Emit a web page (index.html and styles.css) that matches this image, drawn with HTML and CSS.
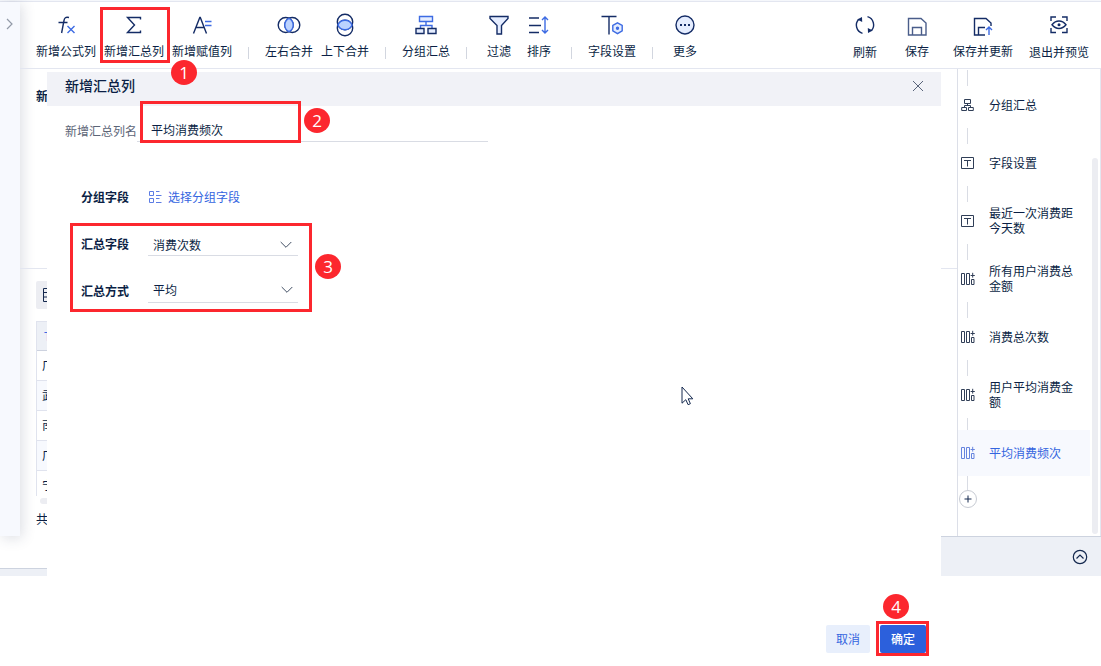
FILE: index.html
```html
<!DOCTYPE html>
<html lang="zh-CN">
<head>
<meta charset="utf-8">
<title>新增汇总列</title>
<link rel="stylesheet" href="styles.css">
</head>
<body>
<svg class="defs" width="0" height="0">
  <symbol id="col" viewBox="0 0 14 14"><path d="M.5 1.5h3v11h-3zM5.500 1.500h3v11h-3zM10.500 7.500h2.500v5h-2.500z"/><path d="M11.700 0.800v4.800M9.600 3.500h4.200"/></symbol>
  <symbol id="tbox" viewBox="0 0 14 14"><path d="M.5 1.500h12v11H.5zM3 4.500h7M6.500 4.500v6"/></symbol>
  <symbol id="org" viewBox="0 0 14 14"><path d="M3.500 1.500h6v4h-6zM.7 9.500h4.800v3H.7zM7.500 9.500h4.800v3H7.500zM6.500 5.500v2M3.500 9.500v-2h6v2"/></symbol>
</svg>
<div class="app">
  <div class="shell">
    <aside class="rail"><svg width="8" height="12" viewBox="0 0 8 12"><path d="M1 1l5 5-5 5"/></svg></aside>
    <div class="main">
      <header class="toolbar">
        <div class="tools">
          <div class="tool"><svg class="icon" viewBox="0 0 24 24"><path d="M15 4.500c-3.500-.8-4.500 .4-5 3L7.600 20M4.500 9.500h9"/><path class="blue" d="M13.500 13l7 7M20.500 13l-7 7"/></svg><span>新增公式列</span></div>
          <div class="tool"><svg class="icon" viewBox="0 0 24 24"><path d="M18.500 6.500V4.500H5.500l7 7.500-7 7.500h13v-2"/></svg><span>新增汇总列</span></div>
          <div class="tool"><svg class="icon" viewBox="0 0 24 24"><path d="M3.500 20.500L9.800 4.500h.5L16.500 20.500M6 14.500h8"/><path class="blue" d="M15 8.500h6.500M15 12.500h6.500"/></svg><span>新增赋值列</span></div>
          <i class="sep"></i>
          <div class="tool"><svg class="icon" viewBox="0 0 24 24"><circle cx="8.700" cy="12" r="7.500"/><circle cx="15.300" cy="12" r="7.500"/><path class="fill" d="M12 5.270a7.500 7.500 0 0 1 0 13.460a7.500 7.500 0 0 1 0-13.460z"/></svg><span>左右合并</span></div>
          <div class="tool"><svg class="icon" viewBox="0 0 24 24"><circle cx="12" cy="9" r="7.700"/><circle cx="12" cy="15" r="7.700"/><path class="fill" d="M4.910 12a7.700 7.700 0 0 1 14.180 0a7.700 7.700 0 0 1-14.180 0z"/></svg><span>上下合并</span></div>
          <i class="sep"></i>
          <div class="tool"><svg class="icon" viewBox="0 0 24 24"><path class="blue tint" d="M5.500 3.500h13v5h-13z"/><path class="blue" d="M12 8.500v4M6.500 15v-2.500h11.500V15"/><path class="tint" d="M2 15.500h8v5H2zM14 15.500h8v5h-8z"/></svg><span>分组汇总</span></div>
          <i class="sep"></i>
          <div class="tool"><svg class="icon" viewBox="0 0 24 24"><path class="tint" d="M3 3.500h18v2l-6.500 7V21h-4.500v-8.500L3 5.500z"/></svg><span>过滤</span></div>
          <div class="tool"><svg class="icon" viewBox="0 0 24 24"><path d="M2 5h10M2 12.500h12M2 19.500h10"/><path class="blue" d="M18 4v16M15 7l3-3 3 3M15 17l3 3 3-3"/></svg><span>排序</span></div>
          <i class="sep"></i>
          <div class="tool"><svg class="icon" viewBox="0 0 24 24"><path d="M1.500 3.500h15M9 3.500V21.500"/><path class="blue tint" d="M17.500 9.800l4.700 2.700v5.400L17.500 20.600l-4.700-2.700v-5.400z"/><circle class="blue dot" cx="17.500" cy="15.200" r="1"/></svg><span>字段设置</span></div>
          <i class="sep"></i>
          <div class="tool"><svg class="icon" viewBox="0 0 24 24"><circle class="tint" cx="12" cy="12" r="9"/><path class="thick" d="M7 12h2M11 12h2M15 12h2"/></svg><span>更多</span></div>
        </div>
        <div class="actions">
          <div class="tool low"><svg class="icon" viewBox="0 0 24 24"><path d="M9.500 20.300A8.500 8.500 0 0 1 5.800 6.200M14.500 3.700A8.500 8.500 0 0 1 18.200 17.800"/><path class="solid" d="M9 4l.2 5-5-2.500zM15 20l-.2-5 5 2.500z"/></svg><span>刷新</span></div>
          <div class="tool"><svg class="icon save" viewBox="0 0 24 24"><path d="M3.500 5.500H16l5 4.500v12H3.500zM7.500 22v-7.500h9V22"/></svg><span>保存</span></div>
          <div class="tool"><svg class="icon" viewBox="0 0 24 24"><path d="M14 22H3.500V5.500H15l5 4.500v3M7.500 22v-7.500h6.500"/><path class="blue" d="M18 22v-8M15 17l3-3 3 3"/></svg><span>保存并更新</span></div>
          <div class="tool low"><svg class="icon" viewBox="0 0 24 24"><path d="M4 8V4h5M15 4h5V8M20 15v4.500h-5M9 19.500H4V15"/><path d="M5 11.800c4-5 10-5 14 0-4 5-10 5-14 0z"/><circle class="solid" cx="12" cy="11.800" r="1.500"/></svg><span>退出并预览</span></div>
        </div>
      </header>
      <div class="body">
        <section class="work">
          <div class="work-head">新</div>
          <div class="work-data">
            <div class="view-btn"><svg width="14" height="14" viewBox="0 0 14 14"><path d="M1.500 .5h12v13h-12zM1.500 4.500h12M1.500 9h12"/></svg></div>
            <div class="grid">
              <div class="grid-head">T</div>
              <div class="grid-row">广</div>
              <div class="grid-row alt">武</div>
              <div class="grid-row">南</div>
              <div class="grid-row alt">广</div>
              <div class="grid-row last">宁</div>
            </div>
            <div class="hbar"></div>
            <div class="count">共</div>
          </div>
        </section>
        <aside class="steps">
          <div class="list">
            <i class="link"></i>
            <div class="step"><svg><use href="#org"/></svg><span>分组汇总</span></div>
            <i class="link"></i>
            <div class="step"><svg><use href="#tbox"/></svg><span>字段设置</span></div>
            <i class="link"></i>
            <div class="step"><svg><use href="#tbox"/></svg><span>最近一次消费距今天数</span></div>
            <i class="link"></i>
            <div class="step"><svg><use href="#col"/></svg><span>所有用户消费总金额</span></div>
            <i class="link"></i>
            <div class="step"><svg><use href="#col"/></svg><span>消费总次数</span></div>
            <i class="link"></i>
            <div class="step"><svg><use href="#col"/></svg><span>用户平均消费金额</span></div>
            <i class="link"></i>
            <div class="step active"><svg><use href="#col"/></svg><span>平均消费频次</span></div>
            <i class="link end"></i>
            <div class="add"><svg width="8" height="8" viewBox="0 0 8 8"><path d="M4 .5v7M.5 4h7"/></svg></div>
          </div>
          <div class="vbar"></div>
        </aside>
      </div>
    </div>
  </div>
  <footer class="foot">
    <div class="foot-left"></div>
    <div class="foot-right"><svg width="16" height="16" viewBox="0 0 16 16"><circle cx="8" cy="8" r="6.700"/><path d="M4.500 9.500L8 6l3.500 3.500"/></svg></div>
  </footer>
</div>

<div class="dialog">
  <div class="dialog-head"><span>新增汇总列</span><svg width="12" height="12" viewBox="0 0 12 12"><path d="M1 1l10 10M11 1L1 11"/></svg></div>
  <div class="name-row"><label>新增汇总列名</label><div class="input">平均消费频次</div></div>
  <div class="form">
    <div class="row"><label>分组字段</label><div class="pick"><svg width="14" height="12" viewBox="0 0 14 12"><path d="M1.500 .5h4v4h-4zM1.500 7.500h4v4h-4zM8 .5h3.500M8 4.500h5.500M8 7.500h3.500M8 11.500h5.500"/></svg>选择分组字段</div></div>
    <div class="row"><label>汇总字段</label><div class="select">消费次数<svg width="12" height="8" viewBox="0 0 12 8"><path d="M.7 1l5.300 5.300L11.300 1"/></svg></div></div>
    <div class="row"><label>汇总方式</label><div class="select second">平均<svg width="12" height="8" viewBox="0 0 12 8"><path d="M.7 1l5.300 5.300L11.300 1"/></svg></div></div>
  </div>
  <div class="buttons"><div class="btn">取消</div><div class="btn primary">确定</div></div>
</div>

<div class="mark m1"></div><div class="num n1">1</div>
<div class="mark m2"></div><div class="num n2">2</div>
<div class="mark m3"></div><div class="num n3">3</div>
<div class="mark m4"></div><div class="num n4">4</div>
<svg class="cursor" width="13" height="20" viewBox="0 0 13 20"><path d="M1 1v16.200l3.800-3.500 2.300 5 2.300-1-2.200-4.900h4.600z"/></svg>
</body>
</html>
```
FILE: styles.css
```css
* { box-sizing: border-box; }
body {
  margin: 0;
  width: 1101px;
  height: 666px;
  overflow: hidden;
  position: relative;
  background: #fff;
  color: #0b1f45;
  font: 12px/16px "Noto Sans CJK SC", sans-serif;
}
svg { fill: none; stroke: #14284e; flex: none; display: block; }
.defs { position: absolute; }
.app { display: flex; flex-direction: column; border-top: 1px solid #f5f7fb; }
.shell { display: flex; height: 535px; border-top: 1px solid #e3e6f0; }
.rail {
  width: 20px;
  height: 534px;
  padding: 16px 0 0 6px;
  background: #f7f9fe;
  box-shadow: 2px 2px 14px rgba(40, 55, 90, .17);
}
.rail svg { stroke: #929aa8; stroke-width: 1.2; }
.main { flex: 1; display: flex; flex-direction: column; }
.toolbar {
  height: 67px;
  flex: none;
  display: flex;
  justify-content: space-between;
  padding: 11px 6px 0 12px;
  border-bottom: 1px solid #e3e6f0;
}
.tools { display: flex; }
.tool {
  min-width: 40px;
  padding: 0 4px;
  display: flex;
  flex-direction: column;
  align-items: center;
  white-space: nowrap;
}
.icon { width: 24px; height: 24px; margin-bottom: 6px; stroke: #142c66; stroke-width: 1.4; }
.save { stroke: #4a5d8a; }
.blue { stroke: #3d6be3; }
.tint { fill: #e5edff; }
.fill { fill: #bcd3ff; stroke: #3d6be3; }
.dot { fill: #3d6be3; }
.solid { fill: #142c66; stroke: none; }
.thick { stroke-width: 2; }
.low .icon { margin-bottom: 7px; }
.sep { width: 1px; height: 12px; margin: 34px 12px 0; background: #d2d6df; }
.actions { display: grid; grid-template-columns: 52px 52px 80px 72px; }
.body { flex: 1; display: flex; min-height: 0; }
.work { flex: 1; }
.work-head { height: 200px; padding: 19px 16px; font-weight: 600; border-bottom: 1px solid #e3e6f0; }
.work-data { padding: 12px 16px 0; }
.view-btn { width: 28px; height: 28px; padding: 7px 6px; border-radius: 2px; background: #ecedf2; }
.grid { margin-top: 12px; border-left: 1px solid #e0e3ee; }
.grid-head { height: 30px; padding: 6px 7px; color: #3d6be3; background: #edf0f6; border-top: 1px solid #e0e3ee; border-bottom: 1px solid #cdd2df; }
.grid-row { height: 30px; padding: 6px 5px; border-bottom: 1px solid #e0e3ee; }
.grid-row.alt { background: #f7f9fe; }
.grid-row.last { height: 25px; border: 0; }
.hbar { height: 6px; margin: 2px 0 7px 4px; border-radius: 3px; background: #ecedf2; }
.steps { width: 144px; display: flex; border-left: 1px solid #dcdfe8; border-right: 1px solid #e3e6f0; }
.list { width: 132px; padding-top: 1px; }
.link { display: block; width: 1px; height: 16px; margin: 0 0 -4px 9px; background: #d9dce4; }
.link.end { height: 14px; margin-bottom: 0; }
.step { position: relative; height: 46px; display: flex; align-items: center; padding: 0 14px 0 3px; gap: 14px; line-height: 15px; }
.step svg { width: 14px; height: 14px; stroke: #303e57; }
.step span { width: 86px; padding-bottom: 2px; }
.step.active { background: #f7f9fe; color: #3465df; }
.step.active svg { stroke: #6684df; }
.add { width: 18px; height: 18px; margin-left: 1px; border: 1px solid #c7cbd3; border-radius: 50%; display: grid; place-items: center; }
.vbar { width: 6px; height: 376px; margin: 89px 0 0 2px; border-radius: 3px; background: #ecedf2; }
.foot { display: flex; justify-content: space-between; height: 40px; }
.foot-left { width: 47px; height: 8px; margin-top: 32px; border-top: 1px solid #cdd3df; background: #edf0f6; }
.foot-right { width: 160px; padding: 12px 13px; display: flex; justify-content: flex-end; border-top: 1px solid #cdd3df; background: #edf0f6; }
.foot-right svg { stroke-width: 1.2; }

.dialog { position: absolute; left: 47px; top: 72px; width: 894px; height: 594px; background: #fff; }
.dialog-head {
  height: 34px;
  padding: 0 17px 6px 18px;
  display: flex;
  align-items: center;
  justify-content: space-between;
  background: #f1f2f7;
  font-size: 14px;
  font-weight: 500;
}
.dialog-head span { padding-bottom: 2px; }
.dialog-head svg { stroke: #59647a; }
.name-row { display: flex; height: 36px; padding-left: 18px; color: #5c6577; }
.name-row label { width: 72px; padding-top: 17px; }
.input { width: 351px; padding: 16px 0 0 14px; color: #0b1f45; border-bottom: 1px solid #d9dce4; }
.form { height: 180px; padding: 39px 34px 0; }
.row { display: flex; height: 47px; align-items: center; padding-bottom: 16px; }
.row label { width: 67px; font-weight: 600; }
.row + .row { padding-bottom: 15px; }
.pick { display: flex; align-items: center; gap: 6px; color: #3465df; }
.pick svg { stroke: #5c7ce4; }
.select { width: 150px; height: 24px; margin-top: -1px; padding: 3px 6px 0 5px; display: flex; justify-content: space-between; align-items: center; border-bottom: 1px solid #d9dce4; }
.row:nth-child(2) .select { align-self: flex-start; margin-top: 4px; }
.select svg { stroke: #414e63; }
.select.second { height: 25px; padding: 0 5px 0 5px; }
.buttons { display: flex; gap: 10px; margin: 303px 0 0 779px; }
.btn { width: 44px; height: 28px; line-height: 28px; text-align: center; border-radius: 2px; color: #3465df; background: #e8effc; }
.btn.primary { width: 46px; color: #fff; background: #2c60dc; font-weight: 500; }

.mark { position: absolute; border: 3px solid #fc272e; }
.m1 { left: 100px; top: 7px; width: 70px; height: 56px; }
.m2 { left: 140px; top: 101px; width: 161px; height: 42px; }
.m3 { left: 70px; top: 223px; width: 242px; height: 89px; }
.m4 { left: 876px; top: 621px; width: 53px; height: 35px; }
.num {
  position: absolute;
  width: 26px;
  height: 25px;
  border-radius: 50%;
  background: #fc272e;
  color: #fff;
  font: 17px/25px "Open Sans", sans-serif;
  text-align: center;
}
.n1 { left: 171px; top: 60px; }
.n2 { left: 304px; top: 108px; }
.n3 { left: 315px; top: 254px; }
.n4 { left: 883px; top: 594px; }
.cursor { position: absolute; left: 681px; top: 386px; fill: #fff; }
```
